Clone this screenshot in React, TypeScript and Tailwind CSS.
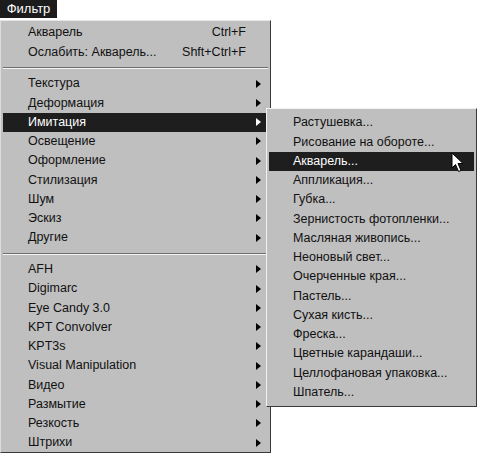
import React from "react";

type Item = { label: string; shortcut?: string; arrow?: boolean; active?: boolean };

const groups: Item[][] = [
  [
    { label: "Акварель", shortcut: "Ctrl+F" },
    { label: "Ослабить: Акварель...", shortcut: "Shft+Ctrl+F" },
  ],
  [
    { label: "Текстура", arrow: true },
    { label: "Деформация", arrow: true },
    { label: "Имитация", arrow: true, active: true },
    { label: "Освещение", arrow: true },
    { label: "Оформление", arrow: true },
    { label: "Стилизация", arrow: true },
    { label: "Шум", arrow: true },
    { label: "Эскиз", arrow: true },
    { label: "Другие", arrow: true },
  ],
  [
    { label: "AFH", arrow: true },
    { label: "Digimarc", arrow: true },
    { label: "Eye Candy 3.0", arrow: true },
    { label: "KPT Convolver", arrow: true },
    { label: "KPT3s", arrow: true },
    { label: "Visual Manipulation", arrow: true },
    { label: "Видео", arrow: true },
    { label: "Размытие", arrow: true },
    { label: "Резкость", arrow: true },
    { label: "Штрихи", arrow: true },
  ],
];

const sub: string[] = [
  "Растушевка...",
  "Рисование на обороте...",
  "Акварель...",
  "Аппликация...",
  "Губка...",
  "Зернистость фотопленки...",
  "Масляная живопись...",
  "Неоновый свет...",
  "Очерченные края...",
  "Пастель...",
  "Сухая кисть...",
  "Фреска...",
  "Цветные карандаши...",
  "Целлофановая упаковка...",
  "Шпатель...",
];

function Arrow({ white }: { white?: boolean }) {
  return (
    <svg width="5" height="8" viewBox="0 0 5 8" className="shrink-0">
      <path d="M0 0 L5 4 L0 8 Z" fill={white ? "#ffffff" : "#000000"} />
    </svg>
  );
}

function Separator() {
  return (
    <div className="flex h-[12.5px] flex-col justify-center">
      <div className="h-px bg-[#6e6e6e]" />
      <div className="h-px bg-[#f4f4f4]" />
    </div>
  );
}

function Cursor() {
  return (
    <svg width="14" height="22" viewBox="0 0 14 22" className="absolute left-[451px] top-[152px]">
      <path
        d="M1 1 L1 16 L4.5 12.5 L7.5 19.5 L10 18.5 L7 11.5 L12 11.5 Z"
        fill="#ffffff"
        stroke="#000000"
        strokeWidth="1"
        strokeLinejoin="miter"
      />
    </svg>
  );
}

export default function App() {
  return (
    <div
      className="relative h-[453px] w-[477px] overflow-hidden bg-white text-[12.5px] text-[#111]"
      style={{ fontFamily: '"Liberation Sans", Arial, sans-serif' }}
    >
      {/* menu bar */}
      <div className="flex h-[18px]">
        <div className="flex w-[57px] items-center justify-center bg-[#1c1c1c] text-[13px] text-white">Фильтр</div>
      </div>

      {/* main menu */}
      <div className="mt-[2px] w-[271px] border border-l-[#dcdcdc] border-t-[#e6e6e6] border-r-[#3a3a3a] border-b-[#3a3a3a] bg-[#bfbfbf] px-[2px] pt-[2px]">
        {groups.map((g, gi) => (
          <div key={gi}>
            {gi > 0 && <Separator />}
            {g.map((it) => (
              <div
                key={it.label}
                className={
                  "flex h-[19.25px] items-center pl-[25px] pr-[7px] " +
                  (it.active ? "bg-[#1e1e1e] text-white" : "")
                }
              >
                <span className="flex-1 whitespace-nowrap">{it.label}</span>
                {it.shortcut && <span className="mr-[15px] whitespace-nowrap">{it.shortcut}</span>}
                {it.arrow && <Arrow white={it.active} />}
              </div>
            ))}
          </div>
        ))}
      </div>

      {/* submenu */}
      <div className="absolute left-[266px] top-[108px] w-[211px] border border-l-[#f2f2f2] border-t-[#f2f2f2] border-r-[#3a3a3a] border-b-[#3a3a3a] bg-[#bfbfbf] px-[2px] py-[4px]">
        {sub.map((s, i) => (
          <div
            key={s}
            className={
              "flex h-[19.28px] items-center whitespace-nowrap pl-[24px] " +
              (i === 2 ? "bg-[#1e1e1e] text-white" : "")
            }
          >
            {s}
          </div>
        ))}
      </div>

      <Cursor />
    </div>
  );
}
